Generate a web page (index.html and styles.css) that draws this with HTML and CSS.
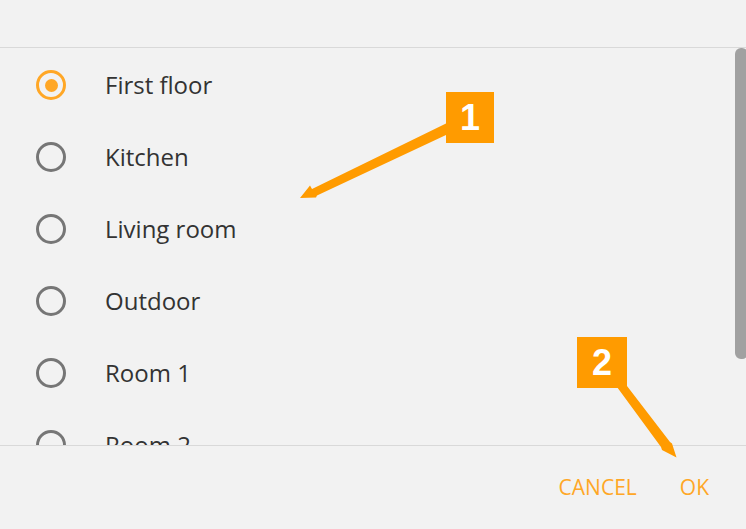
FILE: index.html
```html
<!DOCTYPE html>
<html>
<head>
<meta charset="utf-8">
<link rel="stylesheet" href="styles.css">
</head>
<body>
<div class="dialog">
  <div class="header"></div>
  <div class="list">
    <div class="row"><span class="radio checked"></span><span class="label">First floor</span></div>
    <div class="row"><span class="radio"></span><span class="label">Kitchen</span></div>
    <div class="row"><span class="radio"></span><span class="label">Living room</span></div>
    <div class="row"><span class="radio"></span><span class="label">Outdoor</span></div>
    <div class="row"><span class="radio"></span><span class="label">Room 1</span></div>
    <div class="row"><span class="radio"></span><span class="label">Room 2</span></div>
    <div class="scrollbar"></div>
  </div>
  <div class="footer">
    <span class="btn">CANCEL</span>
    <span class="btn">OK</span>
  </div>
</div>
<svg class="arrows" width="746" height="529" viewBox="0 0 746 529">
  <polygon fill="#ff9b00" points="456,119 446,123.5 312,189 310,185.5 300,198 316,197.5 317,195.5 446,135 456,131"/>
  <polygon fill="#ff9b00" points="611,380 617,387 661,447 662,450 676.5,457.5 672,443.5 670,442 627,386 620,378"/>
</svg>
<div class="badge badge-1">1</div>
<div class="badge badge-2">2</div>
</body>
</html>
```
FILE: styles.css
```css
html, body {
  margin: 0;
  padding: 0;
  background: #f2f2f2;
}
body {
  width: 746px;
  height: 529px;
  overflow: hidden;
  position: relative;
  font-family: "Open Sans", "Liberation Sans", sans-serif;
}
.dialog {
  display: flex;
  flex-direction: column;
  height: 529px;
}
.header {
  height: 47px;
  border-bottom: 1px solid #d9d9d9;
  flex: none;
}
.list {
  position: relative;
  height: 396px;
  padding-top: 1px;
  overflow: hidden;
  flex: none;
}
.row {
  height: 72px;
  display: flex;
  align-items: center;
}
.radio {
  box-sizing: border-box;
  width: 30px;
  height: 30px;
  margin-left: 36px;
  border: 3px solid #767676;
  border-radius: 50%;
  display: flex;
  align-items: center;
  justify-content: center;
  flex: none;
}
.radio.checked {
  border-color: #ffa726;
}
.radio.checked::after {
  content: "";
  width: 13px;
  height: 13px;
  border-radius: 50%;
  background: #ffa726;
}
.label {
  margin-left: 39px;
  padding-bottom: 2px;
  font-size: 24px;
  color: #333333;
}
.scrollbar {
  position: absolute;
  right: -2px;
  top: 0;
  width: 13px;
  height: 311px;
  border-radius: 6px;
  background: #a1a1a1;
}
.footer {
  border-top: 1px solid #d9d9d9;
  flex: 1;
  display: flex;
  justify-content: flex-end;
  align-items: center;
  gap: 43px;
  padding-right: 37px;
  padding-bottom: 2px;
}
.btn {
  font-size: 21px;
  color: #ffa726;
}
.arrows {
  position: absolute;
  left: 0;
  top: 0;
}
.badge {
  position: absolute;
  background: #ff9b00;
  color: #ffffff;
  font-family: "Liberation Sans", Arial, sans-serif;
  font-weight: bold;
  font-size: 36px;
  display: flex;
  align-items: center;
  justify-content: center;
}
.badge-1 {
  left: 446px;
  top: 92px;
  width: 48px;
  height: 51px;
}
.badge-2 {
  left: 577px;
  top: 337px;
  width: 50px;
  height: 51px;
}
```
